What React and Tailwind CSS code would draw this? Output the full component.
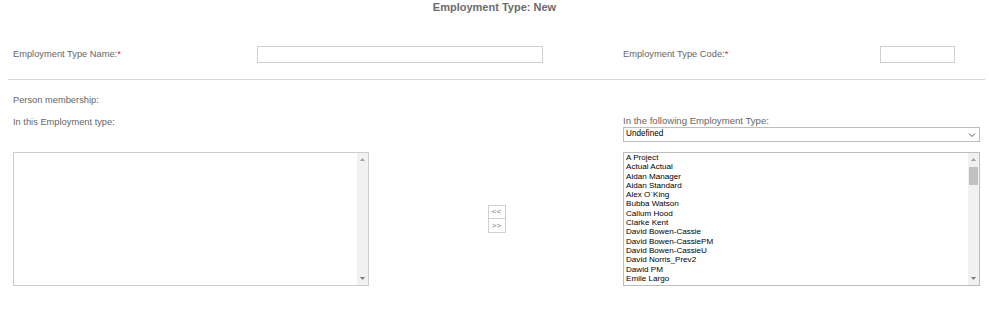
import React from "react";

const people = [
  "A Project",
  "Actual Actual",
  "Aidan Manager",
  "Aidan Standard",
  "Alex O`King",
  "Bubba Watson",
  "Callum Hood",
  "Clarke Kent",
  "David Bowen-Cassie",
  "David Bowen-CassiePM",
  "David Bowen-CassieU",
  "David Norris_Prev2",
  "Dawid PM",
  "Emile Largo",
  "Felix Leiter",
];

function ScrollTrack({ thumb }) {
  return (
    <div className="flex w-[11px] shrink-0 flex-col items-center bg-[#f1f1f1]">
      <svg width="7" height="10" viewBox="0 0 7 10" className="mt-[2px]">
        <path d="M1 6 L3.5 3 L6 6 Z" fill="#a3a3a3" />
      </svg>
      {thumb ? <div className="mt-[2px] h-[18px] w-[9px] bg-[#c1c1c1]" /> : null}
      <div className="flex-1" />
      <svg width="7" height="10" viewBox="0 0 7 10" className="mb-[2px]">
        <path d="M1 4 L3.5 7 L6 4 Z" fill="#7a7a7a" />
      </svg>
    </div>
  );
}

export default function App() {
  return (
    <div
      className="h-[310px] w-[989px] overflow-hidden bg-white text-[#666]"
      style={{ fontFamily: '"Liberation Sans", Arial, sans-serif' }}
    >
      <div className="h-[14px] text-center text-[11px] font-bold leading-[14px] text-[#6b6b6b]">
        Employment Type: New
      </div>

      <div className="mt-[32px] flex h-[17px] items-center pl-[13px] text-[9.3px]">
        <div className="w-[244px]">
          Employment Type Name:<span className="text-[#d0312d]">*</span>
        </div>
        <div className="h-[17px] w-[286px] border border-[#cfcfcf] bg-white" />
        <div className="ml-[80px] w-[257px]">
          Employment Type Code:<span className="text-[#d0312d]">*</span>
        </div>
        <div className="h-[17px] w-[75px] border border-[#cfcfcf] bg-white" />
      </div>

      <div className="ml-[8px] mr-[4px] mt-[16px] border-t border-[#d6d6d6]" />

      <div className="mt-[14px] h-[12px] pl-[13px] text-[9.3px] leading-[12px]">
        Person membership:
      </div>

      <div className="mt-[9px] flex pl-[13px] text-[9.3px]">
        <div className="mt-[1px] h-[12px] w-[610px] leading-[12px]">In this Employment type:</div>
        <div className="w-[357px]">
          <div className="h-[12px] text-[9.6px] leading-[12px]">In the following Employment Type:</div>
          <div className="flex h-[15px] items-center justify-between border border-[#bdbdbd] bg-white pl-[2px] pr-[3px] text-[8.2px] text-black">
            <span>Undefined</span>
            <svg width="8" height="6" viewBox="0 0 8 6">
              <path d="M1 1.5 L4 4.5 L7 1.5" fill="none" stroke="#555" strokeWidth="1" />
            </svg>
          </div>
        </div>
      </div>

      <div className="mt-[10px] flex items-center pl-[13px]">
        <div className="flex h-[134px] w-[356px] border border-[#cdcdcd] bg-white">
          <div className="flex-1" />
          <ScrollTrack />
        </div>

        <div className="flex w-[254px] flex-col items-center pl-[1px]">
          <div className="flex h-[14px] w-[18px] items-center justify-center border border-[#cfcfcf] bg-white text-[8px] leading-none text-[#777]">
            &lt;&lt;
          </div>
          <div className="flex h-[14px] w-[18px] items-center justify-center border border-t-0 border-[#cfcfcf] bg-white text-[8px] leading-none text-[#777]">
            &gt;&gt;
          </div>
        </div>

        <div className="flex h-[134px] w-[357px] border border-[#bdbdbd] bg-white">
          <div className="flex-1 overflow-hidden pl-[2px] text-[8.1px] leading-[9.3px] text-black">
            {people.map((p) => (
              <div key={p} className="whitespace-nowrap">
                {p}
              </div>
            ))}
          </div>
          <ScrollTrack thumb />
        </div>
      </div>
    </div>
  );
}
